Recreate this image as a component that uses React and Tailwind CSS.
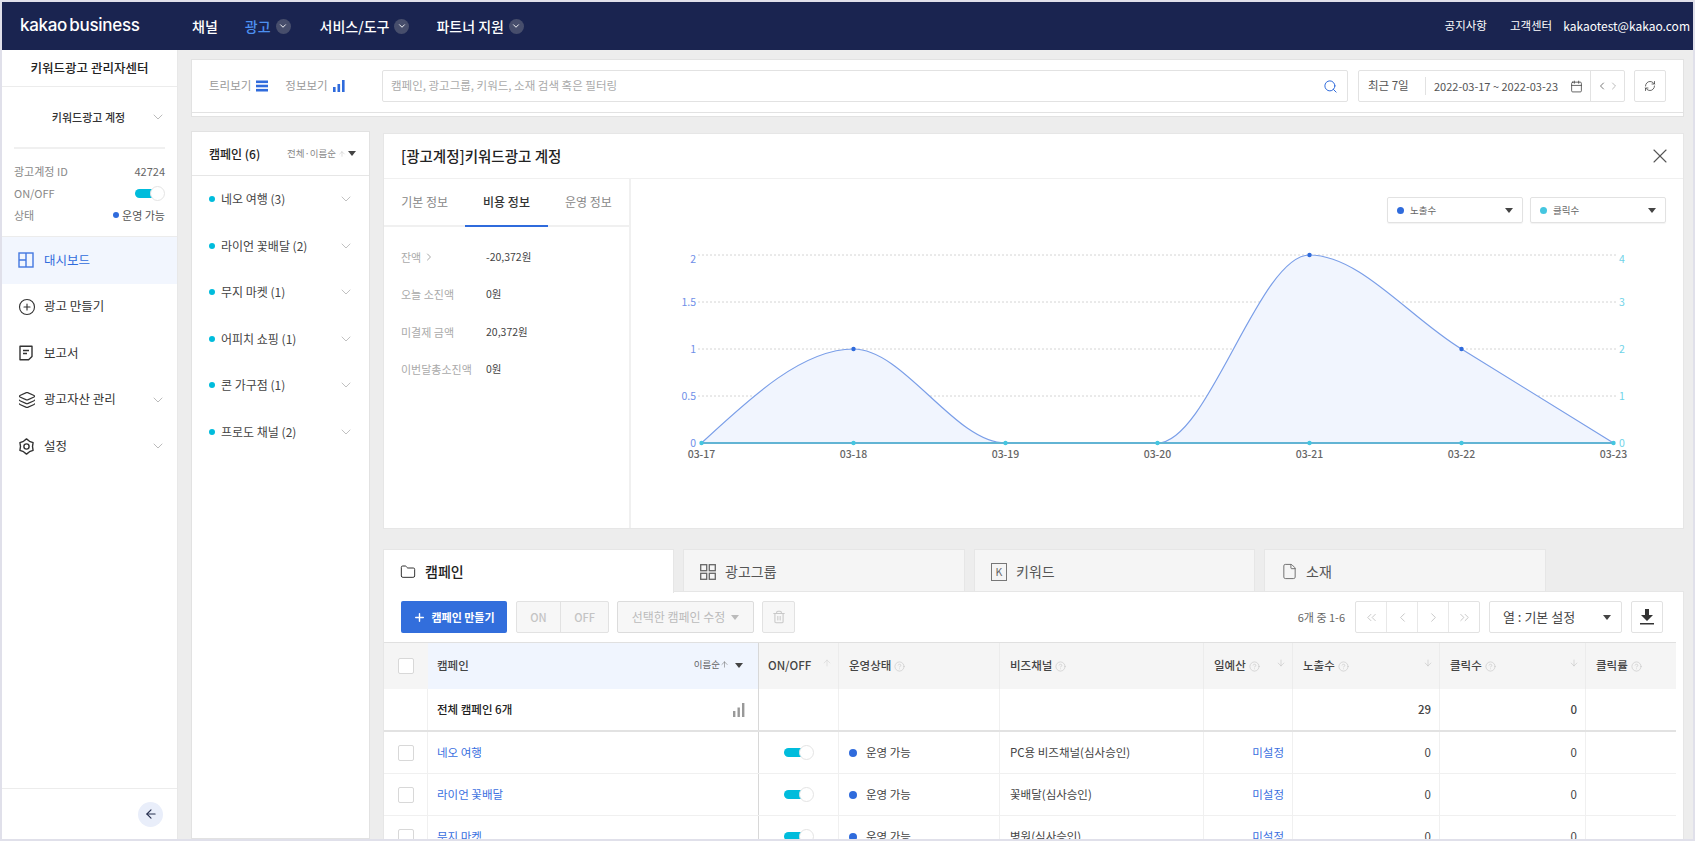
import React from 'react';
import {
  ChevronDown, ChevronLeft, ChevronRight, ChevronsLeft, ChevronsRight, Search, Calendar, RefreshCw, X,
  Layers, CirclePlus, ArrowLeft, Plus, Folder, File, Trash2, ArrowUp, ArrowDown, CircleHelp,
} from 'lucide-react';

const FONT = "font-['Noto_Sans_CJK_KR','Noto_Sans',sans-serif]";
const TABLE_COLS = 'grid grid-cols-[44px_331px_80px_161px_204px_89px_147px_146px_90px]';

const campaigns = ['네오 여행 (3)', '라이언 꽃배달 (2)', '무지 마켓 (1)', '어피치 쇼핑 (1)', '콘 가구점 (1)', '프로도 채널 (2)'];

const rows = [
  { name: '네오 여행', channel: 'PC용 비즈채널(심사승인)' },
  { name: '라이언 꽃배달', channel: '꽃배달(심사승인)' },
  { name: '무지 마켓', channel: '병원(심사승인)' },
];

const Caret = ({ className = '' }) => (
  <span className={`inline-block w-0 h-0 border-l-[4px] border-r-[4px] border-t-[5px] border-l-transparent border-r-transparent border-t-[#444] ${className}`} />
);

const Toggle = () => (
  <span className="relative inline-block w-[30px] h-[15px]">
    <span className="absolute left-0 top-[3px] w-[22px] h-[9px] rounded-full bg-[#00bcdc]" />
    <span className="absolute right-0 top-0 w-[15px] h-[15px] rounded-full bg-white border border-[#e4e4e4]" />
  </span>
);

const Help = () => <CircleHelp className="w-[11px] h-[11px] text-[#c4c4c4] ml-[3px] shrink-0" strokeWidth={1.3} />;

const NavItem = ({ label, active }) => (
  <div className="flex items-center">
    <span className={`text-[14px] font-medium ${active ? 'text-[#4d90f0]' : 'text-white'}`}>{label}</span>
    <span className="ml-[5px] w-[15px] h-[15px] rounded-full bg-[#474e6c] flex items-center justify-center">
      <ChevronDown className="w-[10px] h-[10px] text-white" strokeWidth={2.2} />
    </span>
  </div>
);

const Header = () => (
  <header className="h-[48px] shrink-0 bg-[#1a2450] flex items-center pl-[18px] pr-[3px]">
    <span className="w-[172px] font-['Inter',sans-serif] text-[17px] font-medium tracking-[-0.3px] [word-spacing:-2px] text-white">kakao business</span>
    <span className="text-[14px] font-medium text-white mr-[27px]">채널</span>
    <div className="mr-[29px]"><NavItem label="광고" active /></div>
    <div className="mr-[27px]"><NavItem label="서비스/도구" /></div>
    <NavItem label="파트너 지원" />
    <div className="ml-auto flex items-center text-[11.5px] text-white">
      <span className="mr-[23px]">공지사항</span>
      <span className="mr-[11px]">고객센터</span>
      <span className="text-[12px]">kakaotest@kakao.com</span>
    </div>
  </header>
);

const DashboardIcon = () => (
  <svg viewBox="0 0 16 16" className="w-[16px] h-[16px] text-[#4478e0]" fill="none" stroke="currentColor" strokeWidth="1.4">
    <rect x="1" y="1" width="14" height="14" />
    <path d="M8 1v14M1 8h7" />
  </svg>
);

const ReportIcon = () => (
  <svg viewBox="0 0 16 16" className="w-[16px] h-[16px] text-[#333]" fill="none" stroke="currentColor" strokeWidth="1.4" strokeLinejoin="round">
    <path d="M2 1.2h12v10.2l-3.4 3.4H2z" />
    <path d="M5 5.5h6M5 8.5h4" />
  </svg>
);

// six-lobed outline, like the settings cog in the reference
const cogPoints = Array.from({ length: 12 }, (_, i) => {
  const a = (Math.PI / 6) * i;
  const r = i % 2 === 0 ? 7.6 : 6;
  return `${(8.5 + r * Math.sin(a)).toFixed(2)},${(8.5 - r * Math.cos(a)).toFixed(2)}`;
}).join(' ');

const CogIcon = () => (
  <svg viewBox="0 0 17 17" className="w-[17px] h-[17px] text-[#333]" fill="none" stroke="currentColor" strokeWidth="1.4" strokeLinejoin="round">
    <polygon points={cogPoints} />
    <circle cx="8.5" cy="8.5" r="2.6" />
  </svg>
);

const SideMenu = ({ icon, label, active, arrow }) => (
  <div className={`h-[46.5px] flex items-center pl-[16px] pr-[11px] ${active ? 'bg-[#f2f6fe] text-[#2f6bdc]' : 'text-[#333]'}`}>
    <span className="w-[26px] flex items-center">{icon}</span>
    <span className="text-[12.5px]">{label}</span>
    {arrow && <ChevronDown className="ml-auto w-[16px] h-[16px] text-[#aaa]" strokeWidth={1.2} />}
  </div>
);

const Sidebar = () => (
  <aside className="w-[176px] shrink-0 bg-white flex flex-col border-r border-[#e8e8e8]">
    <div className="h-[37px] flex items-center justify-center border-b border-[#ececec] text-[12.5px] font-medium text-[#222]">키워드광고 관리자센터</div>
    <div className="h-[60px] relative flex items-center justify-center">
      <span className="text-[11px] font-medium text-[#333] mr-[2px]">키워드광고 계정</span>
      <ChevronDown className="absolute right-[11px] w-[16px] h-[16px] text-[#aaa]" strokeWidth={1.2} />
    </div>
    <div className="mx-[12px] border-t-2 border-[#f0f0f0]" />
    <div className="h-[87px] px-[12px] pt-[14px] text-[11px] text-[#888] flex flex-col gap-[6px]">
      <div className="h-[16px] flex items-center justify-between"><span>광고계정 ID</span><span className="text-[#666]">42724</span></div>
      <div className="h-[16px] flex items-center justify-between"><span>ON/OFF</span><Toggle /></div>
      <div className="h-[16px] flex items-center justify-between">
        <span>상태</span>
        <span className="flex items-center text-[#555]"><span className="w-[6px] h-[6px] rounded-full bg-[#2f6bdc] mr-[3px]" />운영 가능</span>
      </div>
    </div>
    <div className="border-t border-[#ececec]">
      <SideMenu active icon={<DashboardIcon />} label="대시보드" />
      <SideMenu icon={<CirclePlus className="w-[18px] h-[18px]" strokeWidth={1.5} />} label="광고 만들기" />
      <SideMenu icon={<ReportIcon />} label="보고서" />
      <SideMenu arrow icon={<Layers className="w-[18px] h-[18px]" strokeWidth={1.5} />} label="광고자산 관리" />
      <SideMenu arrow icon={<CogIcon />} label="설정" />
    </div>
    <div className="mt-auto h-[51px] border-t border-[#ececec] flex items-center justify-end pr-[14px]">
      <span className="w-[25px] h-[25px] rounded-full bg-[#e9eefa] flex items-center justify-center">
        <ArrowLeft className="w-[14px] h-[14px] text-[#27304f]" strokeWidth={2} />
      </span>
    </div>
  </aside>
);

const Toolbar = () => (
  <div className="h-[58px] shrink-0 bg-white border border-[#e2e2e2]">
    <div className="h-[53px] border-b border-[#e2e2e2] flex items-center">
      <div className="w-[190px] pl-[17px] flex items-center text-[11.5px] text-[#999]">
        <span>트리보기</span>
        <svg viewBox="0 0 12 12" className="w-[12px] h-[12px] ml-[5px] text-[#2f6bdc]" fill="currentColor">
          <rect y="0.5" width="12" height="2.6" /><rect y="4.7" width="12" height="2.6" /><rect y="8.9" width="12" height="2.6" />
        </svg>
        <span className="ml-[17px]">정보보기</span>
        <svg viewBox="0 0 12 12" className="w-[12px] h-[12px] ml-[5px] text-[#2f6bdc]" fill="currentColor">
          <rect x="0" y="7" width="2.6" height="5" /><rect x="4.5" y="4" width="2.6" height="8" /><rect x="9" y="0" width="2.6" height="12" />
        </svg>
      </div>
      <div className="w-[966px] h-[32px] border border-[#e2e2e2] rounded-[2px] flex items-center pl-[8px] pr-[9px]">
        <span className="text-[11.5px] text-[#aaa]">캠페인, 광고그룹, 키워드, 소재 검색 혹은 필터링</span>
        <Search className="ml-auto w-[15px] h-[15px] text-[#2f6bdc]" strokeWidth={1.6} />
      </div>
      <div className="ml-[10px] w-[267px] h-[32px] border border-[#e2e2e2] rounded-[2px] flex items-center text-[#555]">
        <span className="w-[66px] pl-[9px] text-[11.5px]">최근 7일</span>
        <span className="w-px h-[18px] bg-[#e2e2e2]" />
        <span className="ml-[8px] w-[128px] text-[11px] whitespace-nowrap">2022-03-17 ~ 2022-03-23</span>
        <Calendar className="ml-[8px] w-[13px] h-[13px] text-[#444]" strokeWidth={1.5} />
        <span className="ml-[7px] h-full flex-1 border-l border-[#e2e2e2] flex items-center justify-center">
          <ChevronLeft className="w-[12px] h-[12px] text-[#555]" strokeWidth={1.6} />
          <ChevronRight className="w-[12px] h-[12px] text-[#aaa]" strokeWidth={1.6} />
        </span>
      </div>
      <div className="ml-[9px] w-[32px] h-[32px] border border-[#e2e2e2] rounded-[2px] flex items-center justify-center">
        <RefreshCw className="w-[12px] h-[12px] text-[#444]" strokeWidth={1.6} />
      </div>
    </div>
  </div>
);

const CampaignList = () => (
  <section className="w-[179px] shrink-0 bg-white border border-[#e2e2e2]">
    <div className="h-[44px] border-b border-[#e6e6e6] flex items-center pl-[17px] pr-[13px]">
      <span className="text-[12px] font-medium text-[#222]">캠페인 (6)</span>
      <span className="ml-auto text-[9.5px] text-[#888] flex items-center">전체·이름순<ArrowUp className="w-[8px] h-[8px] mx-[2px] text-[#bbb]" strokeWidth={1.4} /><Caret /></span>
    </div>
    {campaigns.map((name) => (
      <div key={name} className="h-[46.5px] flex items-center pl-[17px] pr-[15px] text-[12px] text-[#444]">
        <span className="w-[6px] h-[6px] rounded-full bg-[#00bcdc] mr-[6px]" />
        {name}
        <ChevronDown className="ml-auto w-[16px] h-[16px] text-[#aaa]" strokeWidth={1.1} />
      </div>
    ))}
  </section>
);

const infoRows = [
  { label: '잔액', value: '-20,372원', arrow: true },
  { label: '오늘 소진액', value: '0원' },
  { label: '미결제 금액', value: '20,372원' },
  { label: '이번달총소진액', value: '0원' },
];

const LegendSelect = ({ color, label }) => (
  <div className="w-[136px] h-[26px] border border-[#e2e2e2] rounded-[2px] flex items-center pl-[9px] pr-[9px] shadow-[0_1px_1px_rgba(0,0,0,0.05)]">
    <span className="w-[7px] h-[7px] rounded-full mr-[6px]" style={{ backgroundColor: color }} />
    <span className="text-[9.5px] text-[#666]">{label}</span>
    <Caret className="ml-auto" />
  </div>
);

const xs = [701.5, 853.5, 1005.5, 1157.5, 1309.5, 1461.5, 1613.5];
const dates = ['03-17', '03-18', '03-19', '03-20', '03-21', '03-22', '03-23'];
const grid = [
  { y: 255, left: '2', right: '4' },
  { y: 302, left: '1.5', right: '3' },
  { y: 349, left: '1', right: '2' },
  { y: 396, left: '0.5', right: '1' },
  { y: 443, left: '0', right: '0' },
];
const line = 'M701.5 443C752 396 803 349 853.5 349C904 349 955 443 1005.5 443L1157.5 443C1208 443 1259 255 1309.5 255C1360 255 1410 318 1461.5 349L1613.5 443';

const Chart = () => (
  <svg viewBox="631 235 1052 293" className="block w-[1052px] h-[293px]">
    {grid.map((g) => (
      <g key={g.y}>
        {g.y !== 443 && <line x1="698" x2="1617" y1={g.y} y2={g.y} stroke="#d4d4d4" strokeWidth="1" strokeDasharray="2 2" />}
        <text x="696" y={g.y === 255 ? 263 : g.y + 4} textAnchor="end" fontSize="10.5" fill="#6f8fe8">{g.left}</text>
        <text x="1619" y={g.y === 255 ? 263 : g.y + 4} fontSize="10.5" fill="#6fd3e8">{g.right}</text>
      </g>
    ))}
    <path d={`${line}Z`} fill="#f1f5fe" />
    <path d={line} fill="none" stroke="#7a9ee8" strokeWidth="1.2" />
    <line x1="701.5" x2="1613.5" y1="443" y2="443" stroke="#62b4d4" strokeWidth="2" />
    {[[853.5, 349], [1309.5, 255], [1461.5, 349]].map(([x, y]) => (
      <circle key={x} cx={x} cy={y} r="2.2" fill="#2f6bdc" />
    ))}
    {xs.map((x, i) => (
      <g key={x}>
        <circle cx={x} cy="443" r="2.2" fill="#45c6e0" />
        <text x={x} y="458" textAnchor="middle" fontSize="10.5" fontWeight="500" fill="#666">{dates[i]}</text>
      </g>
    ))}
  </svg>
);

const Detail = () => (
  <section className="h-[396px] shrink-0 bg-white border border-[#e6e6e6] flex flex-col">
    <div className="h-[45px] shrink-0 border-b border-[#f0f0f0] flex items-center pl-[17px] pr-[11px]">
      <h2 className="text-[14.5px] font-medium text-[#222]">[광고계정]키워드광고 계정</h2>
      <X className="ml-auto w-[24px] h-[24px] text-[#555]" strokeWidth={1.1} />
    </div>
    <div className="flex-1 flex min-h-0">
      <div className="w-[247px] shrink-0 border-r-2 border-[#f0f0f0]">
        <div className="h-[48px] flex items-stretch border-b-2 border-[#f0f0f0] text-[12px] text-[#888]">
          <span className="w-[82px] flex items-center justify-center">기본 정보</span>
          <span className="w-[83px] -mb-[2px] flex items-center justify-center border-b-2 border-[#2f6bdc] font-medium text-[#333]">비용 정보</span>
          <span className="w-[82px] flex items-center justify-center">운영 정보</span>
        </div>
        <div className="pl-[17px] pt-[11px]">
          {infoRows.map((r) => (
            <div key={r.label} className="h-[37.5px] flex items-center text-[11px]">
              <span className="w-[85px] text-[#aaa] flex items-center">
                {r.label}
                {r.arrow && <ChevronRight className="w-[12px] h-[12px] ml-[2px] text-[#888]" strokeWidth={1.5} />}
              </span>
              <span className="text-[10.5px] text-[#444]">{r.value}</span>
            </div>
          ))}
        </div>
      </div>
      <div className="flex-1 min-w-0">
        <div className="h-[56px] flex justify-end items-start gap-[7px] pt-[18px] pr-[17px]">
          <LegendSelect color="#2f6bdc" label="노출수" />
          <LegendSelect color="#45c6e0" label="클릭수" />
        </div>
        <Chart />
      </div>
    </div>
  </section>
);

const TabIcon4 = () => (
  <svg viewBox="0 0 16 16" className="w-[16px] h-[16px] text-[#666]" fill="none" stroke="currentColor" strokeWidth="1.3">
    <rect x="0.7" y="0.7" width="6" height="6" /><rect x="9.3" y="0.7" width="6" height="6" />
    <rect x="0.7" y="9.3" width="6" height="6" /><rect x="9.3" y="9.3" width="6" height="6" />
  </svg>
);

const KIcon = () => (
  <span className="w-[16px] h-[18px] border border-[#777] flex items-center justify-center text-[10.5px] text-[#666]">K</span>
);

const BottomTab = ({ icon, label, active, className = '' }) => (
  <div className={`h-[44px] flex items-center pl-[16px] border border-[#e6e6e6] border-b-0 ${active ? 'bg-white text-[#222] font-medium relative z-10' : 'bg-[#f5f5f5] text-[#555]'} ${className}`}>
    <span className="w-[25px] flex items-center">{icon}</span>
    <span className="text-[14px]">{label}</span>
  </div>
);

const Btn = ({ children, className = '' }) => (
  <div className={`h-[32px] flex items-center justify-center ${className}`}>{children}</div>
);

const Th = ({ children, className = '', sort }) => (
  <div className={`relative h-[46px] flex items-center text-[11.5px] font-medium text-[#444] border-r border-[#ececec] ${className}`}>
    {children}
    {sort === 'up' && <ArrowUp className="absolute right-[6px] top-[15px] w-[10px] h-[10px] text-[#ccc]" strokeWidth={1.2} />}
    {sort === 'down' && <ArrowDown className="absolute right-[6px] top-[15px] w-[10px] h-[10px] text-[#bbb]" strokeWidth={1.2} />}
  </div>
);

const Cell = ({ children, className = '' }) => (
  <div className={`flex items-center border-r border-[#f0f0f0] ${className}`}>{children}</div>
);

const Checkbox = () => <span className="w-[16px] h-[16px] rounded-[2px] border border-[#d8d8d8] bg-white" />;

const Table = () => (
  <div className="w-[1292px] text-[#444]">
    <div className={`${TABLE_COLS} bg-[#f5f5f5] border-t border-[#e0e0e0]`}>
      <Th className="justify-center border-r-0"><Checkbox /></Th>
      <Th className="bg-[#f0f5fe] pl-[9px] border-r-[#d8d8d8]">
        캠페인
        <span className="absolute right-[15px] top-[14px] flex items-center text-[9.5px] font-normal text-[#666]">이름순<ArrowUp className="w-[9px] h-[9px] mr-[6px] text-[#666]" strokeWidth={1.4} /><Caret className="mt-[3px]" /></span>
      </Th>
      <Th className="pl-[9px]" sort="up">ON/OFF</Th>
      <Th className="pl-[10px]">운영상태<Help /></Th>
      <Th className="pl-[10px]">비즈채널<Help /></Th>
      <Th className="pl-[10px]" sort="down">일예산<Help /></Th>
      <Th className="pl-[10px]" sort="down">노출수<Help /></Th>
      <Th className="pl-[10px]" sort="down">클릭수<Help /></Th>
      <Th className="pl-[10px] border-r-0">클릭률<Help /></Th>
    </div>
    <div className={`${TABLE_COLS} h-[43px] border-b-2 border-[#e2e2e2] text-[11.5px] font-medium text-[#222]`}>
      <Cell />
      <Cell className="pl-[9px] pr-[13px] justify-between border-r-[#d8d8d8]">
        전체 캠페인 6개
        <svg viewBox="0 0 12 14" className="w-[12px] h-[14px] text-[#999]" fill="currentColor">
          <rect x="0" y="8" width="2.4" height="6" /><rect x="4.5" y="4.5" width="2.4" height="9.5" /><rect x="9" y="0" width="2.4" height="14" />
        </svg>
      </Cell>
      <Cell /><Cell /><Cell /><Cell />
      <Cell className="justify-end pr-[8px] text-[#444]">29</Cell>
      <Cell className="justify-end pr-[8px] text-[#444]">0</Cell>
      <Cell className="border-r-0" />
    </div>
    {rows.map((row) => (
      <div key={row.name} className={`${TABLE_COLS} h-[42px] border-b border-[#f0f0f0] text-[11.5px]`}>
        <Cell className="justify-center"><Checkbox /></Cell>
        <Cell className="pl-[9px] text-[#3a6fe0] border-r-[#d8d8d8]">{row.name}</Cell>
        <Cell className="justify-center"><Toggle /></Cell>
        <Cell className="pl-[10px]"><span className="w-[8px] h-[8px] rounded-full bg-[#2f6bdc] mr-[9px]" />운영 가능</Cell>
        <Cell className="pl-[10px]">{row.channel}</Cell>
        <Cell className="justify-end pr-[8px] text-[#3a6fe0]">미설정</Cell>
        <Cell className="justify-end pr-[8px]">0</Cell>
        <Cell className="justify-end pr-[8px]">0</Cell>
        <Cell className="border-r-0" />
      </div>
    ))}
  </div>
);

const Campaigns = () => (
  <div className="flex-1 min-h-0 flex flex-col mt-[20px]">
    <div className="flex h-[43px] shrink-0 gap-[9px] -mb-px">
      <BottomTab active className="w-[291px]" icon={<Folder className="w-[16px] h-[16px] text-[#333]" strokeWidth={1.5} />} label="캠페인" />
      <BottomTab className="w-[282px]" icon={<TabIcon4 />} label="광고그룹" />
      <BottomTab className="w-[281px]" icon={<KIcon />} label="키워드" />
      <BottomTab className="w-[282px]" icon={<File className="w-[17px] h-[17px] text-[#666]" strokeWidth={1.3} />} label="소재" />
    </div>
    <div className="flex-1 min-h-0 bg-white border-l border-r border-t border-[#e6e6e6] overflow-hidden">
      <div className="h-[50px] flex items-center pl-[17px] pr-[20px]">
        <Btn className="w-[106px] bg-[#326edc] rounded-[2px] text-[11px] font-bold text-white">
          <Plus className="w-[13px] h-[13px] mr-[5px]" strokeWidth={2.6} />캠페인 만들기
        </Btn>
        <div className="ml-[9px] w-[93px] h-[32px] flex border border-[#e2e2e2] rounded-[2px] bg-[#f7f7f7] text-[11px] font-medium text-[#c4c4c4]">
          <span className="w-[44px] flex items-center justify-center border-r border-[#e2e2e2]">ON</span>
          <span className="flex-1 flex items-center justify-center">OFF</span>
        </div>
        <Btn className="ml-[8px] w-[137px] border border-[#dcdcdc] rounded-[2px] bg-[#f7f7f7] text-[12px] text-[#bbb]">
          선택한 캠페인 수정<Caret className="ml-[6px] border-t-[#bbb]" />
        </Btn>
        <Btn className="ml-[8px] w-[33px] border border-[#e2e2e2] rounded-[2px] bg-[#f7f7f7]">
          <Trash2 className="w-[14px] h-[14px] text-[#c8c8c8]" strokeWidth={1.8} />
        </Btn>
        <span className="ml-auto text-[11px] text-[#666]">6개 중 1-6</span>
        <div className="ml-[10px] w-[125px] h-[32px] flex border border-[#e2e2e2] rounded-[2px] text-[#bbb]">
          {[ChevronsLeft, ChevronLeft, ChevronRight, ChevronsRight].map((Icon, i) => (
            <span key={i} className={`flex-1 flex items-center justify-center ${i < 3 ? 'border-r border-[#e8e8e8]' : ''}`}>
              <Icon className="w-[15px] h-[15px]" strokeWidth={1.3} />
            </span>
          ))}
        </div>
        <div className="ml-[9px] w-[133px] h-[32px] border border-[#e2e2e2] rounded-[2px] flex items-center pl-[13px] pr-[10px] text-[13px] text-[#444]">
          열 : 기본 설정<Caret className="ml-auto" />
        </div>
        <div className="ml-[9px] w-[32px] h-[32px] border border-[#e2e2e2] rounded-[2px] flex items-center justify-center">
          <svg viewBox="0 0 14 16" className="w-[14px] h-[16px] text-[#333]" fill="currentColor">
            <path d="M5 0h4v6h4L7 12 1 6h4zM0 14h14v1.6H0z" />
          </svg>
        </div>
      </div>
      <Table />
    </div>
  </div>
);

export default function App() {
  return (
    <div className={`w-[1705px] h-[841px] overflow-hidden bg-white pr-[10px] ${FONT}`}>
      <div className="h-full flex flex-col border-2 border-[#e0e0ea]">
        <Header />
        <div className="flex-1 min-h-0 flex">
          <Sidebar />
          <main className="flex-1 min-w-0 bg-[#ededed] pl-[13px] pr-[9px] pt-[9px] flex flex-col">
            <Toolbar />
            <div className="flex-1 min-h-0 flex gap-[13px] mt-[14px]">
              <CampaignList />
              <div className="flex-1 min-w-0 flex flex-col pt-[2px]">
                <Detail />
                <Campaigns />
              </div>
            </div>
          </main>
        </div>
      </div>
    </div>
  );
}
